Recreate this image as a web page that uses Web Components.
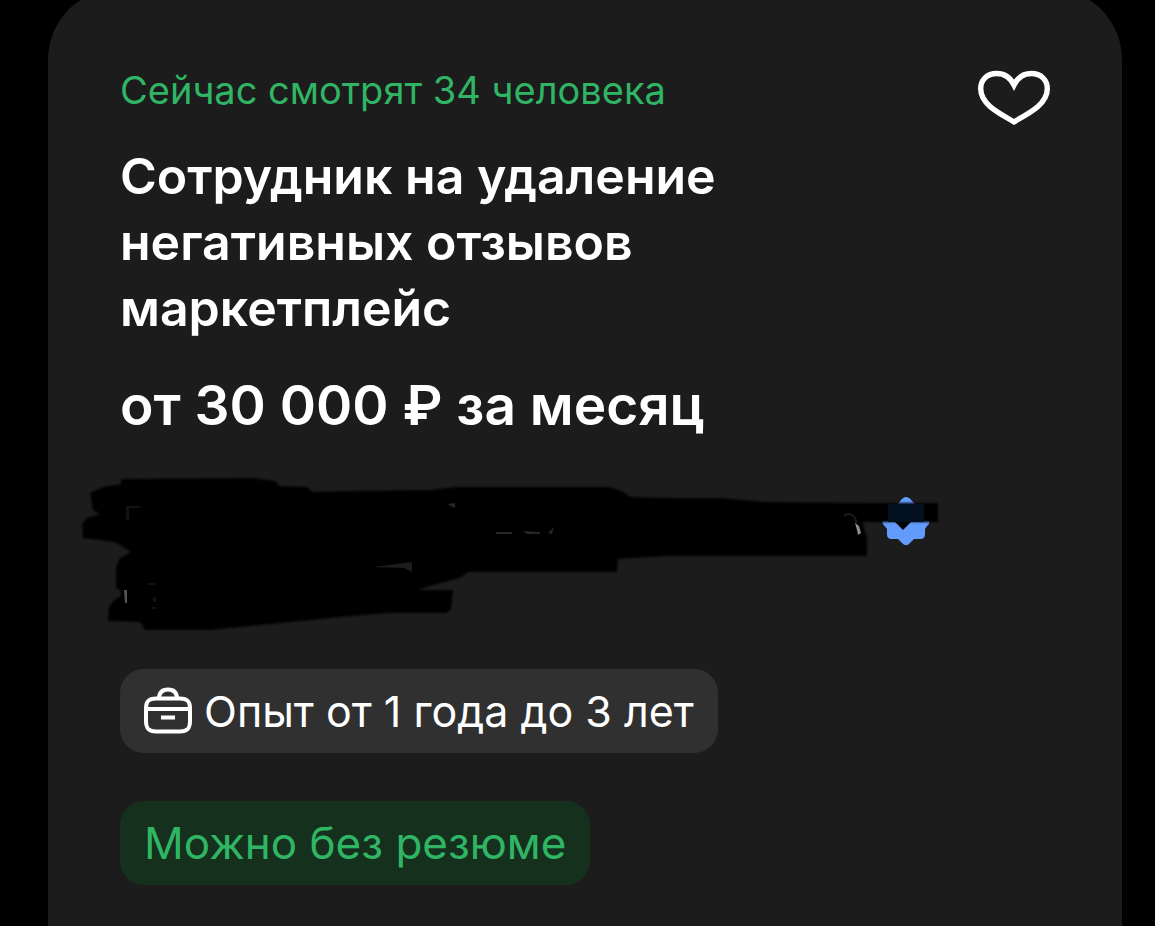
<!DOCTYPE html>
<html lang="ru">
<head>
<meta charset="UTF-8">
<meta name="viewport" content="width=device-width, initial-scale=1">
<title>Вакансия</title>
<style>
  body {
    margin: 0;
    background: #000;
    color: #fff;
    font-family: Inter, "Liberation Sans", sans-serif;
    overflow: hidden;
  }
</style>
</head>
<body>
<vacancy-card>
  <span slot="viewers">Сейчас смотрят 34 человека</span>
  <span slot="title">Сотрудник на удаление негативных отзывов маркетплейс</span>
  <span slot="salary">от 30 000 ₽ за месяц</span>
  <hidden-company slot="company"></hidden-company>
  <info-chip slot="chips" icon="case">Опыт от 1 года до 3 лет</info-chip>
  <info-chip slot="chips" variant="green">Можно без резюме</info-chip>
</vacancy-card>

<script>
class FavoriteButton extends HTMLElement {
  constructor() {
    super();
    this.attachShadow({ mode: 'open' });
  }

  connectedCallback() {
    this.shadowRoot.innerHTML = `
      <style>
        :host { display: block; flex: none; }
        button {
          display: block;
          width: 72px;
          height: 72px;
          padding: 0;
          border: 0;
          background: none;
          color: inherit;
          cursor: pointer;
        }
        svg { display: block; }
      </style>
      <button type="button" aria-label="В избранное">
        <svg width="72" height="72" viewBox="0 0 72 72" fill="none" stroke="currentColor" stroke-width="5.4">
          <path d="M36 25C32.300 17.500 26 13.500 18.500 13.500C9 13.500 2.700 20 2.700 28.500C2.700 35.500 6 41 12 46.500C18.500 52.200 27.500 57 36 61.800C44.500 57 53.500 52.200 60 46.500C66 41 69.300 35.500 69.300 28.500C69.300 20 63 13.500 53.500 13.500C46 13.500 39.700 17.500 36 25Z"/>
        </svg>
      </button>
    `;
  }
}

class InfoChip extends HTMLElement {
  constructor() {
    super();
    this.attachShadow({ mode: 'open' });
  }

  connectedCallback() {
    const icon = this.getAttribute('icon') || '';

    this.shadowRoot.innerHTML = `
      <style>
        :host {
          display: flex;
          align-items: center;
          gap: 12px;
          box-sizing: border-box;
          padding: 12px 24px;
          border-radius: 24px;
          background: #303030;
          font-size: 44px;
          line-height: 60px;
        }
        :host([icon]) { font-size: 43px; }
        :host([variant="green"]) {
          background: #16301e;
          color: #2fb564;
        }
        svg { display: block; flex: none; }
      </style>
      ${icon === 'case' ? `
        <svg width="48" height="48" viewBox="0 0 48 48" fill="none" stroke="currentColor" stroke-width="4" aria-hidden="true">
          <path d="M15 12C15 6 18 2.500 24 2.500S33 6 33 12"/>
          <path d="M12 11.500H36C43 11.500 46 14 46 21V34C46 42 43 44.500 36 44.500H12C5 44.500 2 42 2 34V21C2 14 5 11.500 12 11.500Z"/>
          <path d="M2 22H46M17 30.500H31"/>
        </svg>` : ''}
      <slot></slot>
    `;
  }
}

class HiddenCompany extends HTMLElement {
  constructor() {
    super();
    this.attachShadow({ mode: 'open' });
  }

  connectedCallback() {
    // brush strokes start to the left of the text column
    this.shadowRoot.innerHTML = `
      <style>
        :host { display: block; margin-left: -48px; }
        svg { display: block; width: 888px; height: 180px; }
      </style>
      <svg viewBox="72 465 888 180" aria-hidden="true">
        <defs>
          <filter id="edge" x="-5%" y="-5%" width="110%" height="110%">
            <feGaussianBlur stdDeviation="0.8"/>
          </filter>
        </defs>
        <path fill="#629bfb" d="M906 497C908 497 910 498 912 501L915 504H922C924 504 925 505 925 508V516L929 521C930 523 929 524 927 526L925 529V534C925 538 923 539 920 539H914L910 543C907 546 905 546 902 543L898 539H892C889 539 887 538 887 534V529L883 524C882 522 883 521 884 520L887 516V508C887 505 889 504 892 504H898L901 500C903 498 904 497 906 497Z"/>
        <path fill="#050505" d="M895 522L903 530L911 522Z"/>
        <g filter="url(#edge)">
          <path fill="#060606" d="M350 491L430 490L455 487H609L622 491L632 498H720L765 502L862 503V521L867 538V556H664L618 557L617 572H468L460 578L415 590L400 570Z"/>
          <path d="M90 493L103 487L121 484V479L252 478L275 481L279 486L307 487L313 492L350 491L430 492L460 497H632L710 499L755 503H938V522H858L861 534L866 538L865 556H664L617 559V566L465 569L440 578L418 590H453L451 609L447 613H388L340 617L210 630H145L140 622L108 621L109 607L114 600L121 596V591L116 588V568L120 558L131 552L115 542L83 538L82 524L87 518L100 514L93 510Z"/>
        </g>
        <path fill="#1c1c1c" d="M373 567L412 562V572L404 568Z"/>
        <path fill="#02101f" d="M888 504H924V522H888Z"/>
        <path fill="#111" d="M126 506H140V508H129V520H126ZM147 583H155V585H147ZM153 597H156V602H153ZM151 607H156V609H151Z"/>
        <path fill="#555" d="M124 590H127V603H125Z"/>
        <path fill="#262626" d="M448 504L455 503V508L450 506ZM496 532H512V534H496ZM523 531L540 532V534H527ZM548 533L554 527L552 534Z"/>
        <path fill="none" stroke="#1a1a1a" stroke-width="2" d="M844 516C850 511 857 517 856 524"/>
        <path fill="#8d8d8d" d="M855 523L859 526L861 533L858 535L857 530Z"/>
      </svg>
    `;
  }
}

class VacancyCard extends HTMLElement {
  constructor() {
    super();
    this.attachShadow({ mode: 'open' });
  }

  connectedCallback() {
    this.shadowRoot.innerHTML = `
      <style>
        :host {
          display: block;
          box-sizing: border-box;
          min-height: calc(100vh + 12px);
          margin: -12px 33px 0 48px;
          padding: 72px 72px 40px;
          border-radius: 72px 72px 0 0;
          background: #1c1c1c;
        }
        header {
          display: flex;
          align-items: flex-start;
          justify-content: space-between;
          gap: 24px;
        }
        .info { flex: 0 1 640px; }
        p, h2 { margin: 0; }
        .viewers {
          padding-top: 6px;
          color: #2fb564;
          font-size: 38px;
          line-height: 48px;
        }
        h2 {
          margin-top: 29px;
          font-size: 50px;
          font-weight: 600;
          line-height: 66px;
        }
        .salary {
          margin-top: 28px;
          font-size: 55px;
          font-weight: 600;
          line-height: 72px;
        }
        .company { margin-top: 24px; }
        .chips {
          display: flex;
          flex-direction: column;
          align-items: flex-start;
          gap: 48px;
          margin-top: 24px;
        }
      </style>
      <header>
        <div class="info">
          <p class="viewers"><slot name="viewers"></slot></p>
          <h2><slot name="title"></slot></h2>
          <p class="salary"><slot name="salary"></slot></p>
        </div>
        <favorite-button></favorite-button>
      </header>
      <div class="company"><slot name="company"></slot></div>
      <div class="chips"><slot name="chips"></slot></div>
    `;
  }
}

customElements.define('favorite-button', FavoriteButton);
customElements.define('info-chip', InfoChip);
customElements.define('hidden-company', HiddenCompany);
customElements.define('vacancy-card', VacancyCard);
</script>
</body>
</html>
